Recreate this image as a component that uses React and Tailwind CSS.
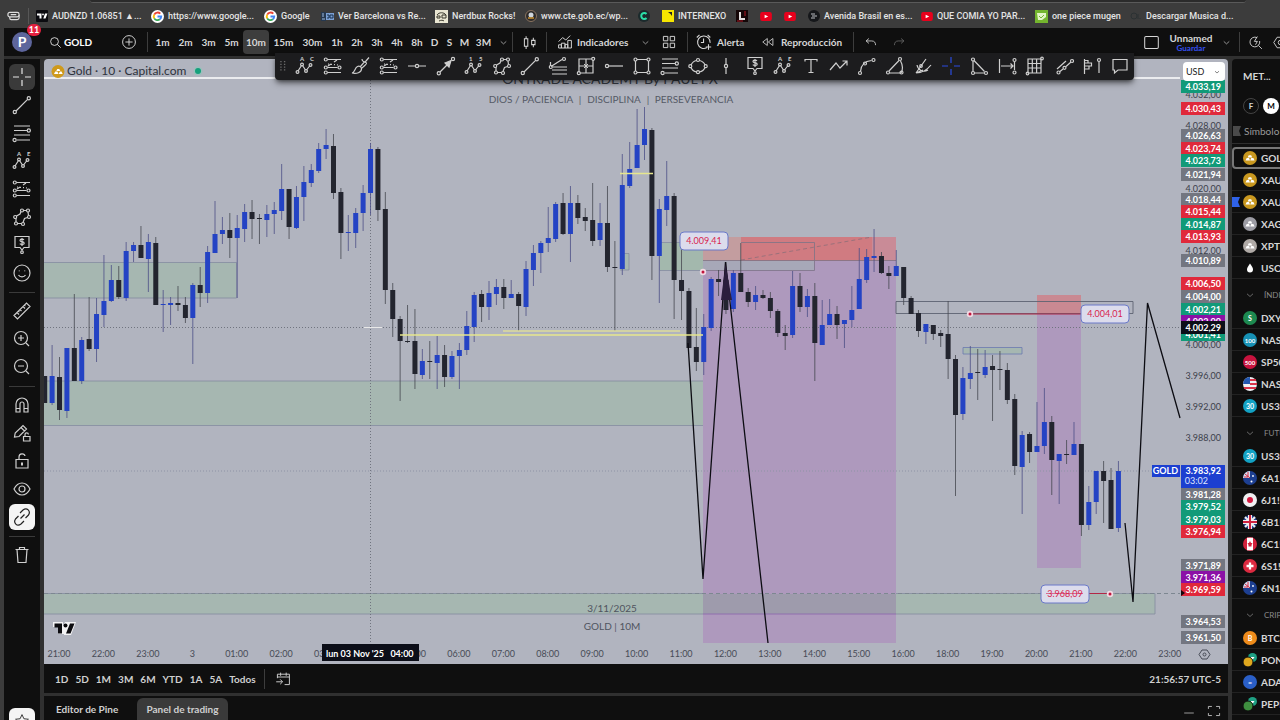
import React from 'react'

const FONT = 'font-["Lato","Noto_Sans",sans-serif]'

// [high, body top, body bottom, low, 1 = up / 0 = down]
const candles = [
    [376, 376, 403, 403, 0], [345, 376, 403, 405, 1], [357, 377, 410, 420, 0], [348, 348, 411, 418, 1],
    [294, 348, 381, 381, 0], [337, 340, 381, 384, 1], [297, 339, 349, 351, 0], [298, 314, 349, 362, 1],
    [255, 301, 315, 327, 1], [265, 280, 301, 302, 1], [266, 280, 297, 299, 0], [242, 251, 298, 301, 1],
    [242, 245, 251, 262, 1], [226, 245, 258, 258, 0], [234, 242, 259, 292, 1], [237, 243, 305, 305, 0],
    [290, 304, 305, 332, 1], [297, 303, 305, 325, 1], [286, 303, 305, 311, 0], [297, 305, 318, 323, 0],
    [283, 285, 318, 364, 1], [267, 285, 293, 307, 0], [246, 252, 293, 303, 1], [201, 234, 253, 253, 1],
    [217, 230, 234, 244, 1], [213, 230, 238, 258, 0], [215, 228, 238, 298, 1], [204, 212, 229, 242, 1],
    [200, 212, 219, 239, 0], [214, 218, 219, 244, 0], [205, 214, 220, 237, 1], [202, 210, 214, 234, 1],
    [164, 189, 211, 220, 1], [189, 189, 227, 239, 0], [186, 197, 228, 229, 1], [166, 182, 197, 221, 1],
    [164, 170, 183, 187, 1], [143, 149, 171, 173, 1], [129, 145, 149, 159, 1], [134, 146, 193, 199, 0],
    [188, 192, 233, 259, 0], [215, 232, 233, 251, 1], [208, 213, 233, 248, 1], [185, 193, 213, 231, 1],
    [143, 149, 193, 215, 1], [147, 149, 210, 221, 0], [192, 209, 290, 304, 0], [283, 290, 319, 337, 0],
    [316, 319, 341, 401, 0], [305, 341, 342, 343, 0], [309, 341, 374, 389, 0], [349, 361, 375, 379, 1],
    [341, 361, 362, 379, 0], [336, 355, 363, 389, 1], [345, 355, 377, 387, 0], [351, 356, 377, 379, 1],
    [343, 350, 356, 389, 1], [311, 326, 350, 355, 1], [292, 295, 327, 342, 1], [290, 294, 307, 322, 0],
    [281, 293, 307, 320, 1], [279, 287, 294, 305, 1], [279, 287, 298, 309, 0], [280, 294, 298, 298, 1],
    [292, 294, 306, 331, 0], [261, 269, 307, 316, 1], [245, 253, 270, 286, 1], [241, 243, 253, 273, 1],
    [207, 238, 243, 252, 1], [202, 204, 239, 242, 1], [193, 203, 234, 235, 0], [186, 203, 234, 262, 1],
    [195, 203, 218, 224, 0], [208, 217, 221, 231, 0], [183, 220, 241, 246, 0], [203, 223, 240, 246, 1],
    [186, 223, 267, 272, 0], [241, 267, 268, 331, 0], [154, 185, 269, 275, 1], [142, 169, 186, 188, 1],
    [109, 145, 168, 168, 1], [107, 129, 145, 160, 1], [128, 130, 256, 280, 0], [199, 209, 256, 303, 1],
    [161, 196, 210, 226, 1], [193, 196, 280, 319, 0], [243, 280, 291, 320, 0], [288, 291, 348, 348, 0],
    [308, 347, 362, 371, 0], [314, 327, 362, 375, 1], [277, 279, 328, 331, 1], [270, 279, 282, 296, 0],
    [262, 280, 310, 314, 0], [270, 273, 309, 312, 1], [243, 273, 292, 292, 0], [288, 292, 302, 307, 0],
    [286, 295, 302, 310, 1], [290, 295, 298, 299, 0], [292, 298, 311, 318, 0], [309, 311, 333, 337, 0],
    [325, 333, 336, 350, 0], [271, 286, 335, 338, 1], [273, 286, 307, 312, 0], [289, 296, 307, 317, 1],
    [283, 296, 343, 381, 0], [300, 325, 345, 345, 1], [299, 314, 325, 325, 1], [306, 314, 325, 339, 0],
    [320, 320, 324, 348, 1], [286, 310, 320, 327, 1], [248, 279, 309, 309, 1], [249, 257, 280, 283, 1],
    [229, 256, 258, 272, 1], [252, 256, 273, 274, 0], [266, 273, 276, 289, 0], [250, 266, 276, 276, 1],
    [267, 267, 298, 305, 0], [296, 298, 314, 314, 0], [310, 313, 331, 337, 0], [324, 324, 332, 344, 1],
    [325, 325, 334, 340, 0], [330, 333, 336, 347, 0], [301, 334, 359, 379, 0], [355, 359, 415, 496, 0],
    [367, 378, 414, 420, 1], [346, 373, 379, 389, 1], [349, 372, 373, 400, 0], [350, 367, 375, 378, 1],
    [355, 366, 370, 421, 0], [351, 369, 370, 390, 0], [363, 370, 400, 404, 0], [394, 399, 466, 475, 0],
    [431, 435, 467, 514, 1], [432, 434, 452, 463, 0], [402, 446, 452, 452, 1], [388, 422, 446, 454, 1],
    [416, 422, 460, 495, 0], [454, 454, 461, 504, 1], [440, 454, 455, 464, 0], [422, 444, 455, 455, 1],
    [444, 444, 525, 536, 0], [486, 502, 525, 530, 1], [471, 471, 502, 514, 1], [461, 471, 481, 523, 0],
    [468, 480, 529, 529, 0], [461, 471, 528, 532, 1],
]

const RED = '#e0293b'
const GREEN = '#119a78'
const GRAY = '#737680'
const PURPLE = '#8b10a6'

const gridPrices = [
    ['4.032,00', 95], ['4.028,00', 126], ['4.020,00', 189], ['4.012,00', 251], ['4.000,00', 345],
    ['3.996,00', 376], ['3.992,00', 407], ['3.988,00', 438],
]

const priceTags = [
    ['4.033,19', 86, GREEN], ['4.030,43', 108, RED], ['4.026,63', 135, GRAY], ['4.023,74', 148, RED],
    ['4.023,73', 160, GREEN], ['4.021,94', 174, GRAY], ['4.018,44', 199, GRAY], ['4.015,44', 211, RED],
    ['4.014,87', 224, GREEN], ['4.013,93', 236, RED], ['4.010,89', 260, GRAY], ['4.006,50', 283, RED],
    ['4.004,00', 296, GRAY], ['4.002,21', 309, GREEN], ['4.002,00', 321, PURPLE], ['4.001,41', 334, GREEN],
    ['4.002,29', 327, '#0c0e18'], ['3.981,28', 494, GRAY], ['3.979,52', 506, GREEN], ['3.979,03', 519, GREEN],
    ['3.976,94', 531, RED], ['3.971,89', 565, GRAY], ['3.971,36', 577, PURPLE], ['3.969,59', 589, RED],
    ['3.964,53', 621, GRAY], ['3.961,50', 637, GRAY],
]

// the market is closed from 17:00 to 18:00
const hours = [
    '21:00', '22:00', '23:00', '3', '01:00', '02:00', '03:00', '', '05:00', '06:00', '07:00', '08:00', '09:00',
    '10:00', '11:00', '12:00', '13:00', '14:00', '15:00', '16:00', '18:00', '19:00', '20:00', '21:00', '22:00',
    '23:00',
]

// drawing tool icons, 20x20 grid
const wave = <><path d="M3 15 6.5 9.5M7.5 9.5 10.5 14M11.5 14 15 9.5" /><circle cx="2.5" cy="16" r="1.4" /><circle cx="7" cy="8.5" r="1.4" /><circle cx="11" cy="15" r="1.4" /><circle cx="15.5" cy="9" r="1.4" /></>
const letters = (a, b) => (
    <g fill="currentColor" stroke="none" fontSize="6" fontWeight="700">
        <text x="5" y="5">{a}</text>
        <text x="15" y="5">{b}</text>
    </g>
)
const icons = {
    cross: <path d="M10 1v6M10 13v6M1 10h6M13 10h6" />,
    trend: <><path d="M4 16 15.6 4.4" /><circle cx="2.8" cy="17" r="1.6" /><circle cx="16.8" cy="3.2" r="1.6" /></>,
    fib: <><path d="M2 3h16M2 7.5h13M2 12h16M5 17h13" /><circle cx="16.8" cy="7.5" r="1.6" /><circle cx="2.6" cy="17" r="1.6" /></>,
    fibExt: <><path d="M4.5 3.5H18M4.5 11.5h10M4.5 16.5H18M5 10l3-2M11 6l3-2" /><path d="M5 8l10 1" strokeDasharray="1 2" /><circle cx="2.8" cy="3.5" r="1.5" /><circle cx="2.8" cy="11.5" r="1.5" /><circle cx="2.8" cy="16.5" r="1.5" /><circle cx="16.5" cy="11.5" r="1.5" /></>,
    waveAC: <>{letters('A', 'C')}{wave}</>,
    waveAE: <>{letters('A', 'E')}{wave}</>,
    wave15: <>{letters('1', '5')}{wave}</>,
    brush: <><path d="M1 17c3-.5 2.500-5 5.500-6.500 2-1 4 .5 4 2.500 0 3.500-5 5-9.500 4ZM9.500 10.500 13 6.500c.5-1 2 0 2.500.5.600.8-3.500 4.200-4.700 5.200M11 3c0 2.500 2.500 3.500 4 2l3-3.500" /></>,
    hline: <><path d="M1 10h7.400M11.600 10H19" /><circle cx="10" cy="10" r="1.600" /></>,
    arrow: <><path d="M4 16 12 8" /><path d="m9 7 6-2.500L13 11Z" fill="currentColor" /><circle cx="2.800" cy="17.200" r="1.600" /><circle cx="17" cy="3" r="1.600" /></>,
    path: <><path d="M4.500 9 8 7l1-2.500M11.500 3.500H14.500M16 5l.5 3.500M15.500 10.500l-3 1-1.500 4M9.500 16.500H5.500M4 15v-4" /><circle cx="3.200" cy="10" r="1.500" /><circle cx="10" cy="3.500" r="1.500" /><circle cx="16" cy="3.500" r="1.500" /><circle cx="17" cy="10" r="1.500" /><circle cx="11" cy="17" r="1.500" /><circle cx="4" cy="16.500" r="1.500" /></>,
    fan: <><path d="m3 10.500 11-7M5 11h14M4 14h15M4 18h15M2.500 10V6" /><circle cx="16" cy="3" r="1.500" /><circle cx="2.800" cy="11" r="1.500" /></>,
    gann: <><path d="M3 3h14v14H3ZM10 3v14M3 10h14" /><path d="m8 8 4 4M12 8l-4 4" strokeWidth="1" /><circle cx="2.800" cy="17.200" r="1.500" fill="#1c1c1e" /><circle cx="17.200" cy="2.800" r="1.500" fill="#1c1c1e" /></>,
    ray: <><path d="M5 10h14" /><circle cx="3" cy="10" r="1.600" /></>,
    rect: <><path d="M5 3.500h10M5 16.500h10M3.500 5v10M16.500 5v10" /><circle cx="3.500" cy="3.500" r="1.500" /><circle cx="16.500" cy="3.500" r="1.500" /><circle cx="3.500" cy="16.500" r="1.500" /><circle cx="16.500" cy="16.500" r="1.500" /></>,
    ellipse: <><path d="M3 9c1.500-3 4-4.300 5.500-4.500M11.500 4.500C14 5 16 6.500 17 9M17 11.500c-1 2.500-3 4-5.500 4.500M8.500 16C6 15.500 4 14 3 11.500" /><circle cx="10" cy="4" r="1.500" /><circle cx="10" cy="16.200" r="1.500" /><circle cx="2.300" cy="10.200" r="1.500" /><circle cx="17.700" cy="10.200" r="1.500" /></>,
    vline: <><path d="M10 2v6.400M10 11.600V18" /><circle cx="10" cy="10" r="1.600" /></>,
    price: <><path d="M3 1.500h14v11h-5l-2 2.500-2-2.500H3Z" /><path d="M12 4.800c-1-1-4-.8-4 .6 0 1.800 4.200.8 4.200 2.800 0 1.500-3.200 1.700-4.400.5M10 3v8" /><circle cx="10" cy="17.200" r="1.300" /></>,
    text: <path d="M4 5.500V3.500h12v2M10 3.500v13M7.500 16.500h5" />,
    zigzag: <path d="M1 14 7 7l4 5 7-7M13.500 5H18v4.500" />,
    curve: <><path d="M3.500 15.500C4 9 8 5 14.500 4.500" /><circle cx="3" cy="17" r="1.500" /><circle cx="8" cy="7.500" r="1.500" /><circle cx="16.500" cy="4" r="1.500" /></>,
    sector: <><path d="M4 15 14 4.500M5 17h11c2-2.500 2-8-.5-12" /><circle cx="3" cy="16.500" r="1.500" /><circle cx="15" cy="3" r="1.500" /><circle cx="16.500" cy="16.500" r="1.500" /></>,
    compass: <><path d="M3 17 13 3M3 17c7 0 11-3 15-8M4 9c1 5 6 8 11 5M3 17l7-3" /><circle cx="8" cy="10" r="1.300" /></>,
    triangle: <><path d="M4 5v10.500M5.500 17H15M5 4.500 15.500 15.500" /><circle cx="4" cy="3.500" r="1.500" /><circle cx="4" cy="17" r="1.500" /><circle cx="17" cy="17" r="1.500" /></>,
    range: <><path d="M2.500 3v14M17.500 6v8M4 10h12M13.500 7.500 16 10l-2.500 2.500" /><circle cx="17.500" cy="4" r="1.500" /><circle cx="17.500" cy="16.500" r="1.500" /></>,
    grid: <><path d="M3 3h13v14H3ZM7.300 3v14M11.600 3v14M3 7.500h13M3 12h13" /><circle cx="17" cy="2.500" r="1.300" /><circle cx="2.500" cy="17.500" r="1.300" /></>,
    channel: <><path d="m3 13 9-8M6 15.500 9 13M12 10.500l5-4.500" /><circle cx="4.500" cy="16.500" r="1.500" /><circle cx="10.500" cy="11.800" r="1.500" /><circle cx="18" cy="5" r="1.500" /></>,
    profile: <><path d="M2.500 3v15M2.500 4.500H6V7H2.500M2.500 7h7v3h-7M2.500 10H7v3H2.500M17 5.500V17" /><circle cx="17" cy="4" r="1.500" /></>,
    comment: <path d="M3 3.500h14v10.500H8L4.500 17v-3H3Z" />,
    smile: <><circle cx="10" cy="10" r="8" /><path d="M6.500 12c1.500 2.500 5.500 2.500 7 0M7.300 7.500v.8M12.700 7.500v.8" /></>,
    ruler: <path d="M2 14.500 14.500 2 18 5.500 5.500 18ZM5 11.500l2 2M8 8.500l1.500 1.500M11 5.500l2 2M6.500 10l1 1M12.500 4l1 1" />,
    zoomIn: <><circle cx="9" cy="9" r="6.500" /><path d="m14 14 3 3M9 6v6M6 9h6" /></>,
    zoomOut: <><circle cx="9" cy="9" r="6.500" /><path d="m14 14 3 3M6 9h6" /></>,
    magnet: <path d="M4 17V9a6 6 0 0 1 12 0v8h-4V9a2 2 0 0 0-4 0v8ZM4 13.500h4M12 13.500h4" />,
    pencilLock: <><path d="m2.500 14 .7-4L11 2.500l3.500 3.500L7 13.500ZM9 4.500 12.500 8M11.500 13.500H18V18h-6.500ZM13 13.500V11.500a1.700 1.700 0 0 1 3.400 0" /></>,
    lock: <><path d="M4 8.500h12v8.500H4ZM7 8.500V6c0-4 5.500-4 6-1" /><path d="M10 11.500v3" strokeWidth="2" /></>,
    eye: <><path d="M2 10c4-8 12-8 16 0-4 8-12 8-16 0Z" /><circle cx="10" cy="10" r="3" /></>,
    link: <path d="m8.500 11.500 4-4M8 6l3-3c4-3 8 1 5.500 5l-3 3M12 14l-3 3c-4 3-8-1-5.500-5l3-3" />,
    trash: <path d="M3.500 4.500h13M7.500 4.500V2.500h5v2M5 4.500 6 17.500h8l1-13" />,
    star: <path d="m10 2 2.400 5.200 5.600.6-4.200 3.800 1.200 5.600-5-2.900-5 2.900 1.200-5.600L2 7.800l5.600-.6Z" />,
    candles: <path d="M4 5.500h4v9H4ZM6 2.500v3M6 14.500v3M12.500 7.500h4v5h-4ZM14.500 4.500v3M14.500 12.500v3" />,
    indicators: <path d="M2 17.500v-4h3.500v4M5.500 17.500v-6H10v6M10 17.500V13h3.500v4.500M13.500 17.500V8H18v9.500H2M2 9.500l5-5 4 3 5.500-5.500" />,
    layout: <path d="M3 3h5.500v5.500H3ZM11.500 3H17v5.500h-5.500ZM3 11.500h5.500V17H3ZM11.500 11.500H17V17h-5.500Z" />,
    alert: <path d="M13 16.500A7 7 0 1 1 16.800 11M9.500 6v4.500H6.500M2 5l3-3M14 2l3 3M15 12.500v6M12 15.500h6" />,
    rewind: <path d="M9 5 2.500 10 9 15ZM17 5l-6.500 5 6.500 5Z" />,
    undo: <path d="M7 5 3 8.500 7 12M3 8.500h8c4 0 5.500 2.500 5.500 6" />,
    redo: <path d="m13 5 4 3.500L13 12M17 8.500H9c-4 0-5.500 2.500-5.500 6" />,
    search: <><circle cx="8.500" cy="8.500" r="6" /><path d="m13 13 5 5" /></>,
    quickSearch: <><path d="M12 3.500A6.500 6.500 0 1 0 15.500 8M14 14l4.500 4.500M12.500 2 8.500 8.500h4L10 13" /></>,
    plus: <><circle cx="10" cy="10" r="8" /><path d="M10 5.500v9M5.500 10h9" /></>,
    square: <rect x="2" y="3" width="16" height="14" rx="1.500" />,
    chevron: <path d="m5 8 5 4.500L15 8" />,
    goto: <path d="M3 9V4h15v13h-6M3 7.500h15M7 2v4M14 2v4M1.500 13.500H9M6.500 10.500l3 3-3 3" />,
    gear: <><path d="M5.500 3h9L19 10l-4.500 7h-9L1 10Z" /><circle cx="10" cy="10" r="3" /></>,
    corners: <path d="M2 7V3.500h5M13 3.500h5V7M18 13v3.500h-5M7 16.500H2V13" />,
    minimize: <path d="M2 15h16" />,
}

const Icon = ({ name, className = 'size-5' }) => (
    <svg viewBox="0 0 20 20" fill="none" stroke="currentColor" strokeWidth="1.200" className={`shrink-0 ${className}`} aria-hidden="true">
        {icons[name]}
    </svg>
)

const Separator = () => <div className="h-5 w-px shrink-0 bg-[#3d3d3d]" />

const GoogleMark = () => (
    <svg viewBox="0 0 14 14" className="size-[13px] shrink-0" fill="none" strokeWidth="2">
        <circle cx="7" cy="7" r="7" fill="#fff" />
        <path d="M10 4A4 4 0 0 0 3.500 5" stroke="#ea4335" />
        <path d="M3.500 5a4 4 0 0 0 0 4" stroke="#fbbc05" />
        <path d="M3.500 9A4 4 0 0 0 9.500 10" stroke="#34a853" />
        <path d="M9.500 10A4 4 0 0 0 11 7H7" stroke="#4285f4" />
    </svg>
)

const YoutubeMark = () => (
    <svg viewBox="0 0 13 10" className="h-[9px] w-3 shrink-0">
        <rect width="13" height="10" rx="2.500" fill="#e8001c" />
        <path d="m5 3 4 2-4 2Z" fill="#fff" />
    </svg>
)

const TvMark = () => (
    <svg viewBox="0 0 12 12" className="size-3 shrink-0">
        <rect width="12" height="12" rx="1" fill="#0b0b10" />
        <path d="M1 3.500h4.500v5h-2v-3H1ZM9 3.500h2.500l-2 5H7.300Z" fill="#fff" />
        <circle cx="7" cy="4.400" r=".9" fill="#fff" />
    </svg>
)

const ScoreMark = () => (
    <svg viewBox="0 0 13 9" className="h-[9px] w-[13px] shrink-0">
        <path d="M0 0h5v9H0Z" fill="#26384f" />
        <path d="M1 2h2M1 4h2M1 7h3" stroke="#9dbbe2" />
        <path d="M5 1h8v7H5Z" fill="#7ba0d4" />
        <path d="M6 3h2v3H6M9 3h3v3H9Z" stroke="#18304f" fill="none" />
    </svg>
)

const NerdMark = () => (
    <svg viewBox="0 0 13 13" className="size-[13px] shrink-0">
        <rect width="13" height="13" fill="#e9e6d2" />
        <path d="M2 5c2-3 7-3 9 0M2 6h3v2H2ZM7 5h4v3H7ZM4 11c2-1 4-1 5 0" stroke="#38362b" fill="none" />
    </svg>
)

const CteMark = () => (
    <svg viewBox="0 0 12 12" className="size-3 shrink-0">
        <circle cx="6" cy="6" r="5.500" fill="#2d2b2a" stroke="#8a7460" />
        <circle cx="6" cy="5" r="2.500" fill="#cfd6dc" />
        <path d="M3 8h6" stroke="#c9902f" strokeWidth="1.500" />
    </svg>
)

const CMark = () => (
    <svg viewBox="0 0 12 12" className="size-3 shrink-0">
        <circle cx="6" cy="6" r="6" fill="#1b2a2c" />
        <path d="M8.500 4a3 3 0 1 0 0 4" stroke="#2be0a8" strokeWidth="2" fill="none" />
    </svg>
)

const NexoMark = () => (
    <svg viewBox="0 0 12 12" className="size-3 shrink-0">
        <rect width="12" height="12" fill="#f7e600" />
        <path d="M6 2h4v4L8.500 4Z" fill="#222" />
    </svg>
)

const LMark = () => (
    <svg viewBox="0 0 12 12" className="size-3 shrink-0">
        <rect width="12" height="12" fill="#140607" />
        <path d="M4 2v7h5" stroke="#e0dcdc" strokeWidth="2" fill="none" />
        <path d="M9 1v5M1 11h6" stroke="#b01724" />
    </svg>
)

const GlobeMark = () => (
    <svg viewBox="0 0 12 12" className="size-3 shrink-0" fill="none">
        <circle cx="6" cy="6" r="6" fill="#15171a" />
        <path d="M3 4h4M4 6h5M3 8h4" stroke="#b9bcc0" />
    </svg>
)

const PieceMark = () => (
    <svg viewBox="0 0 13 13" className="size-[13px] shrink-0">
        <rect width="13" height="13" fill="#74b52e" />
        <path d="M2 3h9v4l-4 3H3Z" fill="#e4f5c8" />
        <path d="m4 6 2 2 3-3" stroke="#74b52e" fill="none" />
    </svg>
)

const MusicMark = () => (
    <svg viewBox="0 0 12 12" className="size-3 shrink-0" fill="none" stroke="#2b3133">
        <circle cx="4" cy="6" r="3" />
        <path d="M8 4v5M10 8v1" />
    </svg>
)

const bookmarks = [
    { icon: <TvMark />, label: 'AUDNZD 1.06851 ▲...', w: 'w-[115px]' },
    { icon: <GoogleMark />, label: 'https://www.google...', w: 'w-[113px]' },
    { icon: <GoogleMark />, label: 'Google', w: 'w-[57px]' },
    { icon: <ScoreMark />, label: 'Ver Barcelona vs Re...', w: 'w-[114px]' },
    { icon: <NerdMark />, label: 'Nerdbux Rocks!', w: 'w-[90px]' },
    { icon: <CteMark />, label: 'www.cte.gob.ec/wp...', w: 'w-[113px]' },
    { icon: <CMark />, name: 'C', w: 'w-6' },
    { icon: <NexoMark />, label: 'INTERNEXO', w: 'w-[74px]' },
    { icon: <LMark />, name: 'L', w: 'w-6' },
    { icon: <YoutubeMark />, name: 'YouTube', w: 'w-6' },
    { icon: <YoutubeMark />, name: 'YouTube', w: 'w-6' },
    { icon: <GlobeMark />, label: 'Avenida Brasil en es...', w: 'w-[113px]' },
    { icon: <YoutubeMark />, label: 'QUE COMIA YO PAR...', w: 'w-[114px]' },
    { icon: <PieceMark />, label: 'one piece mugen', w: 'w-[95px]' },
    { icon: <MusicMark />, label: 'Descargar Musica d...', w: 'w-[115px]' },
]

const BookmarksBar = () => (
    <div className="h-7 shrink-0 overflow-hidden bg-[#3c3c3c]">
        <div className="mr-[34px] ml-[90px] h-[3px] rounded-b-xl border-b border-[#5a5a5a] bg-[#2b2b2b]" />
        <nav className='flex h-[26px] items-center pl-[7px] font-["Roboto","Noto_Sans",sans-serif] text-[9px] leading-4 font-medium text-[#e4e4e4]'>
            <svg viewBox="0 0 14 12" className="h-3 w-[13px] shrink-0" fill="none" stroke="#ddd" strokeWidth="1.300">
                <rect x="1" y="2" width="12" height="5" rx="2" />
                <path d="M3 7v1.500c0 1 .5 1.500 1.500 1.500H11c1 0 2-1 2-2V5M4 4.500h6" />
            </svg>
            <div className="mr-[7px] ml-2 h-4 w-px shrink-0 bg-[#575757]" />
            {bookmarks.map((item, index) => (
                <a key={index} href="#" aria-label={item.name} className={`flex shrink-0 items-center gap-1 whitespace-nowrap ${item.w}`}>
                    {item.icon}
                    {item.label && <span>{item.label}</span>}
                </a>
            ))}
        </nav>
    </div>
)

const intervals = [
    ['1m', 'w-[23px]'], ['2m', 'w-[23px]'], ['3m', 'w-[23px]'], ['5m', 'w-[23px]'], ['10m', 'w-[26px]'],
    ['15m', 'w-[29px]'], ['30m', 'w-[29px]'], ['1h', 'w-5'], ['2h', 'w-5'], ['3h', 'w-5'], ['4h', 'w-5'],
    ['8h', 'w-5'], ['D', 'w-[15px]'], ['S', 'w-[15px]'], ['M', 'w-[15px]'], ['3M', 'w-[23px]'],
]

const Header = () => (
    <header className="flex h-7 shrink-0 items-center bg-[#0f0f0f] text-[10px] leading-4 font-bold text-[#d6d6d6]">
        <button aria-label="Perfil" className="relative ml-2 flex size-5 shrink-0 items-center justify-center rounded-full bg-[#5d659c] text-sm font-bold text-white">
            P
            <span className="absolute -top-2 left-[15px] flex h-3 w-[14px] items-center justify-center rounded-full bg-[#e5203f] text-[9px] leading-3">11</span>
        </button>
        <button className="ml-[17px] flex w-[72px] shrink-0 items-center gap-0.5 text-white">
            <Icon name="search" className="size-[13px]" />
            <span>GOLD</span>
        </button>
        <button aria-label="Comparar" className="mr-2.5 shrink-0"><Icon name="plus" className="size-4" /></button>
        <Separator />
        <div className="ml-[3px] flex shrink-0">
            {intervals.map(([label, w]) => (
                <button key={label} className={`flex h-6 shrink-0 items-center justify-center rounded ${w} ${label === '10m' ? 'bg-[#3d3d3d]' : ''}`}>
                    {label}
                </button>
            ))}
        </div>
        <button aria-label="Más intervalos" className="mx-[3px] shrink-0"><Icon name="chevron" className="size-[11px]" /></button>
        <Separator />
        <button aria-label="Velas" className="mx-2 shrink-0"><Icon name="candles" className="size-[17px]" /></button>
        <Separator />
        <button className="ml-2.5 flex w-[75px] shrink-0 items-center gap-1">
            <Icon name="indicators" className="size-4" />
            Indicadores
        </button>
        <button aria-label="Favoritos" className="ml-2 shrink-0"><Icon name="chevron" className="size-[11px]" /></button>
        <button aria-label="Plantillas" className="mr-2.5 ml-2.5 shrink-0"><Icon name="layout" className="size-4" /></button>
        <Separator />
        <button className="ml-[7px] flex w-[66px] shrink-0 items-center gap-1">
            <Icon name="alert" className="size-[18px]" />
            Alerta
        </button>
        <button className="flex w-[92px] shrink-0 items-center gap-1.5">
            <Icon name="rewind" className="size-[14px]" />
            Reproducción
        </button>
        <Separator />
        <button aria-label="Deshacer" className="ml-2.5 shrink-0"><Icon name="undo" className="size-[14px]" /></button>
        <button aria-label="Rehacer" className="ml-[14px] shrink-0 text-[#686868]"><Icon name="redo" className="size-[14px]" /></button>
        <div className="flex-1" />
        <button aria-label="Diseño" className="shrink-0"><Icon name="square" className="size-[17px]" /></button>
        <button className="ml-2 flex w-[46px] shrink-0 flex-col items-center">
            <span className="text-[10px] leading-3">Unnamed</span>
            <span className="text-[8px] leading-2 text-[#3550f0]">Guardar</span>
        </button>
        <button aria-label="Opciones de diseño" className="mx-[7px] shrink-0"><Icon name="chevron" className="size-[11px]" /></button>
        <Separator />
        <button aria-label="Búsqueda rápida" className="ml-2 shrink-0"><Icon name="quickSearch" className="size-[15px]" /></button>
        <button aria-label="Ajustes" className="-mr-2 ml-2.5 shrink-0"><Icon name="gear" className="size-[15px]" /></button>
    </header>
)

const sideTools = [
    ['cross', 'trend', 'fib', 'waveAE', 'fibExt', 'path', 'price', 'smile'],
    ['ruler', 'zoomIn', 'zoomOut'],
    ['magnet', 'pencilLock', 'lock', 'eye', 'link'],
    ['trash'],
]

const toolStyle = {
    cross: 'rounded-md bg-[#3a3a3a] text-[#e5e5e5]',
    link: 'rounded-md bg-[#f4f4f4] text-[#222]',
}

const SideToolbar = () => (
    <aside className="flex w-9 shrink-0 flex-col items-center overflow-hidden bg-[#0f0f0f] pt-1 text-[#cfcfcf]">
        {sideTools.map((group, index) => (
            <React.Fragment key={index}>
                {index > 0 && <div className="mt-[5px] mb-1 h-px w-[26px] shrink-0 bg-[#3a3a3a]" />}
                {group.map((name) => (
                    <button key={name} aria-label={name} className="flex h-7 shrink-0 items-center">
                        <span className={`flex size-[26px] items-center justify-center ${toolStyle[name] || ''}`}>
                            <Icon name={name} />
                        </span>
                    </button>
                ))}
            </React.Fragment>
        ))}
        <button aria-label="Favoritos" className="mt-auto -mb-[14px] flex size-[26px] shrink-0 items-center justify-center rounded-md bg-[#f4f4f4] text-[#333]">
            <Icon name="star" className="size-4" />
        </button>
    </aside>
)

const favoriteTools = [
    'waveAC', 'fibExt', 'brush', 'fibExt', 'hline', 'arrow', 'wave15', 'path', 'trend', 'fan', 'gann', 'ray', 'rect',
    'fib', 'ellipse', 'vline', 'price', 'waveAE', 'text', 'zigzag', 'curve', 'sector', 'compass', 'cross', 'triangle',
    'range', 'grid', 'channel', 'profile', 'comment',
]

const FavoritesToolbar = () => (
    <div className="absolute -top-[6px] right-[94px] left-[231px] flex h-[27px] items-center rounded-b bg-[#1c1c1e] pb-0.5 text-[#cfcfcf] shadow-md shadow-black/50">
        <svg viewBox="0 0 6 12" className="mx-[5px] h-[11px] w-[6px] shrink-0" fill="#6b6b6b">
            {[1, 4, 7, 10].map((y) => (
                <path key={y} d={`M0 ${y}h1.500v1.500H0ZM4 ${y}h1.500v1.500H4Z`} />
            ))}
        </svg>
        {favoriteTools.map((name, index) => (
            <button key={index} aria-label={name} className={`flex flex-1 items-center justify-center ${name === 'cross' ? 'text-[#2a4be0]' : ''}`}>
                <Icon name={name} />
            </button>
        ))}
    </div>
)

const Callout = ({ x, y, label, w = 48 }) => (
    <g>
        <rect x={x} y={y} width={w} height="18" rx="4" fill="#dcdcec" stroke="#6a79c8" />
        <text x={x + w / 2} y={y + 12} fontSize="9" fill="#d81f4f" textAnchor="middle">{label}</text>
    </g>
)

const Dot = ({ x, y }) => (
    <g>
        <circle cx={x} cy={y} r="3.200" fill="#f3d9e2" />
        <circle cx={x} cy={y} r="1.500" fill="#c0143c" />
    </g>
)

const Chart = () => (
    <svg viewBox="44 59 1184 605" preserveAspectRatio="xMinYMin slice" className="block size-full" role="img" aria-label="Gold 10m">
        <rect x="44" y="59" width="1184" height="605" fill="#b1b4bf" />

        {/* watermark */}
        <g fill="#3a3f49" textAnchor="middle">
            <text x="610" y="84" fontSize="14">ONTRADE ACADEMY By PAUL FX</text>
            <g fontSize="10" fill="#555a66">
                <text x="531" y="103">DIOS / PACIENCIA</text>
                <text x="580" y="103">|</text>
                <text x="614" y="103">DISCIPLINA</text>
                <text x="648" y="103">|</text>
                <text x="694" y="103">PERSEVERANCIA</text>
            </g>
        </g>

        {/* zones */}
        <g fill="#a6b7b1" stroke="#848ba0" strokeWidth=".8">
            <path d="M44 262.500H236.500V298H44" />
            <path d="M44 381H703.500V425.500H44" />
            <path d="M44 593.500H1155V614H44" />
            <path d="M660 242.500H814.500V270.500H660Z" fill="none" />
            <path d="M620 253.500H629V270H620" />
            <path d="M963 347.500H1022V354H963Z" stroke="#6b79b0" />
        </g>
        <path d="M660 243h43v27h-43Z" fill="#a3b8ad" />
        <path d="M703 261H896V643H703Z" fill="#ae99bd" />
        <path d="M703 594H896V614H703Z" fill="#9e9bac" />
        <path d="M703 614H896" stroke="#8f6fae" />
        <path d="M703 261H814V270H703Z" fill="#a7a8b8" />
        <path d="M703 237H741V261H703Z" fill="#c39d9f" />
        <path d="M741 237H872V261H741Z" fill="#d07b81" />
        <path d="M872 237H896V261H872Z" fill="#c98b97" />
        <path d="M703 260.500H896M741 242.500H814.500V270.500H703" stroke="#7b7386" strokeWidth=".8" fill="none" />
        <path d="M741 260 872 237" stroke="#8d6f78" strokeWidth=".8" strokeDasharray="4 3" />
        <path d="M1037 295H1081V314H1037Z" fill="#c98992" />
        <path d="M1037 314H1081V568H1037Z" fill="#ae99bd" />
        <path d="M896 301.500H1133V313.500H896Z" fill="none" stroke="#5d6372" strokeWidth=".9" />

        {/* crosshair and price lines */}
        <g strokeWidth="1">
            <path d="M44 327.500H1180M370.500 80V643" stroke="#70747f" strokeDasharray="1 2" />
            <path d="M44 471H1152" stroke="#8e93a5" strokeDasharray="1 2" />
            <path d="M44 593.500H1180" stroke="#7d8791" strokeDasharray="4 3" />
            <path d="M364 327.500H382" stroke="#e8e8e8" />
        </g>

        {candles.map(([high, top, bottom, low, up], index) => {
            const x = 44.7 + index * 7.405
            return (
                <g key={index}>
                    <path d={`M${x} ${high}V${low}`} stroke={up ? '#4c4f86' : '#45474f'} strokeWidth=".8" />
                    <rect x={x - 2.5} y={top} width="5" height={bottom - top} fill={up ? '#2443c4' : '#23252f'} />
                </g>
            )
        })}

        <path d="M400 335H703M620 173.500H653" stroke="#e6e68e" strokeWidth="1.300" />
        <path d="M503 331H680" stroke="#dedc9c" strokeWidth="1.300" />
        <g fill="none" stroke="#0c0c12" strokeWidth="1.300">
            <path d="M688 343 703 579 725.500 262 768 643" />
            <path d="M1125 523 1133 602 1147.500 303 1180 418" />
        </g>
        <path d="M721 300 725.500 264 732 300Z" fill="#2b1d3d" />

        <path d="M970 314H1081" stroke="#b32746" />
        <path d="M1088 593.500H1110" stroke="#b32746" />
        <Callout x={680} y={232} label="4.009,41" />
        <Callout x={1081} y={305} label="4.004,01" />
        <Callout x={1041} y={585} label="3.968,09" />
        <path d="M1046 593.500H1083" stroke="#d81f4f" strokeWidth=".6" />
        <Dot x={703} y={272} />
        <Dot x={970} y={314} />
        <Dot x={1110} y={594} />

        <g fontSize="10" fill="#50545f" textAnchor="middle">
            <text x="612" y="612">3/11/2025</text>
            <text x="612" y="630">GOLD | 10M</text>
        </g>
        <path d="M53 622h10v4l2-4h11l-5 13h-7v-1H58v-7h-5Z" fill="#f3f3f5" />
        <path d="M54.500 623.500H62v10h-4v-6h-3.500ZM70 623.500h4.500l-4 10h-4.500Z" fill="#0c0c10" />
        <circle cx="65.500" cy="625.500" r="2" fill="#0c0c10" />

        {/* legend */}
        <path d="M44 78H1180" stroke="#fff" strokeWidth="1.500" />
        <circle cx="58" cy="71.500" r="6.500" fill="#cf9a1c" />
        <path d="m54 74 1.200-2.500h2.200L58.500 74ZM58.700 74l1.200-2.500h1.600l1.200 2.500ZM56.300 71l1-2h2l1 2Z" fill="#fff" />
        <text x="67" y="75" fontSize="12" fill="#2e323c">Gold · 10 · Capital.com</text>
        <circle cx="198" cy="71" r="4.500" fill="#9cc0bd" />
        <circle cx="198" cy="71" r="3" fill="#15a07c" />

        {/* price scale */}
        <g fontSize="9" textAnchor="end">
            {gridPrices.map(([label, y]) => (
                <text key={label} x="1221" y={y + 3} fill="#3c404b">{label}</text>
            ))}
            {priceTags.map(([label, y, color]) => (
                <g key={label}>
                    <rect x="1181" y={y - 6} width="44" height="13" fill={color} />
                    <text x="1221" y={y + 4} fill="#fff" fontWeight="700">{label}</text>
                </g>
            ))}
            <rect x="1181" y="465" width="44" height="23" fill="#1c3fd0" />
            <text x="1221" y="474" fill="#fff" fontWeight="700">3.983,92</text>
            <text x="1208" y="484" fill="#dfe4ff">03:02</text>
            <rect x="1152" y="465" width="28" height="12" fill="#1c3fd0" />
            <text x="1178" y="474" fill="#fff" fontWeight="700">GOLD</text>
            <path d="m1181 590 4 3-4 3Z" fill="#14060a" />
        </g>

        {/* time scale */}
        <g fontSize="9" textAnchor="middle" fill="#474b56">
            {hours.map((label, index) => label && (
                <text key={index} x={59 + index * 44.430} y="657">{label}</text>
            ))}
            <rect x="322" y="644" width="97" height="17" fill="#0c0e18" />
            <text x="355" y="657" fill="#fff" fontWeight="700">lun 03 Nov '25</text>
            <text x="402" y="657" fill="#fff" fontWeight="700">04:00</text>
        </g>
        <g fill="none" stroke="#474b56">
            <path d="M1202 650h5l3 4.500-3 4.500h-5l-3-4.500Z" />
            <circle cx="1204.500" cy="654.500" r="1.500" />
        </g>
    </svg>
)

const ranges = ['1D', '5D', '1M', '3M', '6M', 'YTD', '1A', '5A', 'Todos']

const BottomBar = () => (
    <>
        <div className="flex h-[29px] shrink-0 items-center bg-[#0f0f0f] pr-[7px] pl-[11px] text-[10px] leading-4 font-bold text-[#cfcfcf]">
            <div className="flex gap-[7px]">
                {ranges.map((label) => <button key={label}>{label}</button>)}
            </div>
            <div className="mr-2.5 ml-2"><Separator /></div>
            <button aria-label="Ir a"><Icon name="goto" className="size-4" /></button>
            <span className="ml-auto">21:56:57 UTC-5</span>
        </div>
        <div className="h-[3px] shrink-0 bg-[#303030]" />
        <div className="flex h-6 shrink-0 items-end overflow-hidden bg-[#0f0f0f] pr-[7px] text-[10px] leading-4 font-bold text-[#cfcfcf]">
            <button className="h-[22px] w-[93px] pl-3 text-left">Editor de Pine</button>
            <button className="h-[22px] w-[91px] rounded-t-md bg-[#3a3a3a]">Panel de trading</button>
            <button aria-label="Minimizar" className="mr-3 ml-auto pb-1"><Icon name="minimize" className="size-3" /></button>
            <button aria-label="Maximizar" className="pb-0.5"><Icon name="corners" className="size-[14px]" /></button>
        </div>
    </>
)

const Coin = ({ kind }) => {
    const metal = (color) => (
        <>
            <circle cx="7" cy="7" r="7" fill={color} />
            <path d="m2.500 9.500 1.200-2.500h2.300l1 2.500ZM7.200 9.500l1-2.500h2.200l1.200 2.500ZM4.700 6.500l1-2.300h2.500l1 2.300Z" fill="#fff" />
        </>
    )
    const disc = (color, label) => (
        <>
            <circle cx="7" cy="7" r="7" fill={color} />
            <text x="7" y="9.500" fill="#fff" fontSize={label.length > 2 ? 6 : 7} fontWeight="700" textAnchor="middle">{label}</text>
        </>
    )
    const pair = (back, front) => (
        <>
            <circle cx="9.500" cy="4.500" r="4.500" fill={back} />
            <path d="M7.500 4h4l-2 3Z" fill="#fff" />
            <circle cx="5" cy="9" r="5" fill={front} stroke="#0f0f0f" />
        </>
    )
    const blueFlag = (
        <>
            <circle cx="7" cy="7" r="7" fill="#1d3f91" />
            <path d="M7 0v7H0A7 7 0 0 1 7 0Z" fill="#d9dff0" />
            <path d="M5 1v5H1M2 3l5 4" stroke="#d32b40" fill="none" />
            <circle cx="10" cy="5" r=".9" fill="#fff" />
            <circle cx="8.500" cy="10.500" r="1" fill="#fff" />
        </>
    )
    const art = {
        gold: metal('#c9981f'),
        silver: metal('#9c9ca4'),
        platinum: metal('#b0aaa6'),
        oil: <path d="M7 2.500c2 3 3 4.300 3 6a3 3 0 0 1-6 0c0-1.700 1-3 3-6Z" fill="#fff" />,
        dxy: disc('#1d8a50', 'S'),
        n100: disc('#1791b5', '100'),
        sp: disc('#c8133e', '500'),
        dow: disc('#13a2c4', '30'),
        btc: disc('#ee8b1b', 'B'),
        ada: disc('#2a5fc7', '='),
        us: <><circle cx="7" cy="7" r="7" fill="#eef0f4" /><path d="M7 3h6M7 7h7M1 11h12" stroke="#d8334a" strokeWidth="1.800" /><path d="M7 0v7H0A7 7 0 0 1 7 0Z" fill="#2156b0" /></>,
        au: blueFlag,
        nz: blueFlag,
        jp: <><circle cx="7" cy="7" r="7" fill="#f0f0f2" /><circle cx="7" cy="7" r="3" fill="#d3193f" /></>,
        gb: <><circle cx="7" cy="7" r="7" fill="#24428e" /><path d="M2 2l10 10M12 2 2 12" stroke="#eee" strokeWidth="2" /><path d="M7 0v14M0 7h14" stroke="#eee" strokeWidth="4" /><path d="M7 0v14M0 7h14" stroke="#cf2340" strokeWidth="2" /></>,
        ca: <><circle cx="7" cy="7" r="7" fill="#d3223c" /><path d="M4 .7h6v12.600H4Z" fill="#fff" /><path d="m7 4 1 2h1.500L8.500 8v1.500h-3V8l-1-2H6Z" fill="#d3223c" /></>,
        ch: <><circle cx="7" cy="7" r="7" fill="#dc2a40" /><path d="M7 3.500v7M3.500 7h7" stroke="#fff" strokeWidth="2.300" /></>,
        pon: pair('#1fa184', '#e0a81e'),
        pepe: pair('#1fa184', '#3f8f3f'),
    }
    return <svg viewBox="0 0 14 14" className="size-[14px] shrink-0">{art[kind]}</svg>
}

const watchlist = [
    { items: [['gold', 'GOLD'], ['gold', 'XAUUSD'], ['gold', 'XAUUSD'], ['silver', 'XAGUSD'], ['platinum', 'XPTUSD'], ['oil', 'USOIL']] },
    { title: 'ÍNDICES', items: [['dxy', 'DXY'], ['n100', 'NAS100'], ['sp', 'SP500'], ['us', 'NAS100'], ['dow', 'US30']] },
    { title: 'FUTUROS', items: [['dow', 'US30'], ['au', '6A1!'], ['jp', '6J1!'], ['gb', '6B1!'], ['ca', '6C1!'], ['ch', '6S1!'], ['nz', '6N1!']] },
    { title: 'CRIPTO', items: [['btc', 'BTCUSD'], ['pon', 'PONKE'], ['ada', 'ADA'], ['pepe', 'PEPE']] },
]

const Watchlist = () => (
    <aside className="flex w-12 shrink-0 flex-col overflow-hidden rounded-tl bg-[#0f0f0f] text-[10px] leading-4 font-bold text-[#d6d6d6]">
        <div className="flex h-[34px] shrink-0 items-center pl-[11px]">MET...</div>
        <div className="flex h-[26px] shrink-0 items-center gap-1 pl-[11px] text-[8px]">
            <button className="flex size-4 shrink-0 items-center justify-center rounded-full border border-[#444]">F</button>
            <button className="flex size-4 shrink-0 items-center justify-center rounded-full bg-white text-black">M</button>
        </div>
        <div className="flex h-6 shrink-0 items-center gap-[3px] pl-px font-normal text-[#9a9a9a]">
            <svg viewBox="0 0 8 10" className="h-2.5 w-2 shrink-0"><path d="M0 0h8L6 5l2 5H0Z" fill="#4a4a4a" /></svg>
            Símbolo
        </div>
        <div className="h-px shrink-0 bg-[#2e2e2e]" />
        <div className="flex shrink-0 flex-col pt-[3px]">
            {watchlist.map((group, groupIndex) => (
                <React.Fragment key={groupIndex}>
                    {group.title && (
                        <button className="flex h-7 items-center gap-2 pt-1 pl-3 text-[8px] font-normal text-[#8a8a8a]">
                            <Icon name="chevron" className="size-3" />
                            {group.title}
                        </button>
                    )}
                    {group.items.map(([kind, label], index) => {
                        const selected = groupIndex === 0 && index === 0
                        const flagged = groupIndex === 0 && index === 2
                        return (
                            <button
                                key={index}
                                className={`relative flex h-[22px] w-20 items-center gap-1 whitespace-nowrap ${selected ? 'rounded border-2 border-[#777] pl-[9px]' : 'border-b border-[#222] pl-[11px]'}`}
                            >
                                {flagged && (
                                    <svg viewBox="0 0 8 10" className="absolute left-0 h-2.5 w-2"><path d="M0 0h8L6 5l2 5H0Z" fill="#2f62e8" /></svg>
                                )}
                                <Coin kind={kind} />
                                {label}
                            </button>
                        )
                    })}
                </React.Fragment>
            ))}
        </div>
    </aside>
)

const App = () => {
    return (
        <div className={`flex h-screen flex-col overflow-hidden bg-[#303030] ${FONT}`}>
            <BookmarksBar />
            <div className="flex min-h-0 flex-1 flex-col border-l-4 border-[#3c3c3c]">
                <Header />
                <div className="flex min-h-0 flex-1 pt-[3px]">
                    <SideToolbar />
                    <main className="ml-1 flex min-w-0 flex-1 flex-col">
                        <div className="relative min-h-0 flex-1">
                            <div className="size-full overflow-hidden rounded-t">
                                <Chart />
                            </div>
                            <FavoritesToolbar />
                            <div className="absolute top-[3px] right-[3px] flex h-[19px] w-[42px] items-center rounded bg-white">
                                <select aria-label="Moneda" className="size-full appearance-none pl-[3px] text-[9px] text-[#222]">
                                    <option>USD</option>
                                </select>
                                <Icon name="chevron" className="pointer-events-none absolute right-1 size-2 text-black" />
                            </div>
                        </div>
                        <BottomBar />
                    </main>
                    <div className="w-1 shrink-0" />
                    <Watchlist />
                </div>
            </div>
        </div>
    )
}

export default App
